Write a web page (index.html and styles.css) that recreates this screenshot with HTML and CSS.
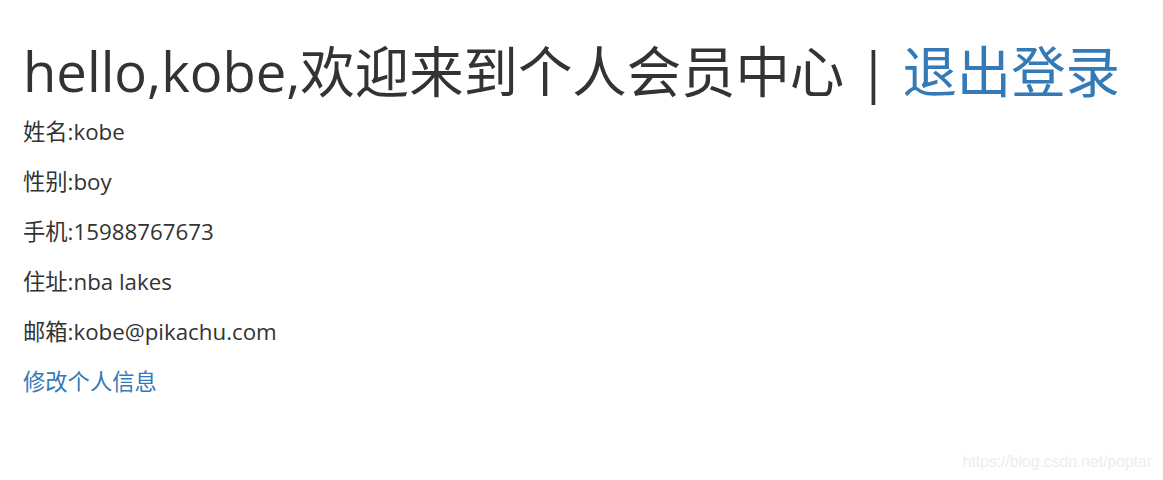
FILE: index.html
```html
<!DOCTYPE html>
<html lang="zh-CN">
<head>
<meta charset="utf-8">
<title>个人会员中心</title>
<link rel="stylesheet" href="styles.css">
</head>
<body>
<div class="page">
  <h1 class="title">hello,kobe,欢迎来到个人会员中心 <span class="sep">|</span> <a class="link" href="#">退出登录</a></h1>
  <p class="row">姓名:kobe</p>
  <p class="row">性别:boy</p>
  <p class="row">手机:15988767673</p>
  <p class="row">住址:nba lakes</p>
  <p class="row">邮箱:kobe@pikachu.com</p>
  <a class="link edit" href="#">修改个人信息</a>
</div>
<div class="watermark">https://blog.csdn.net/poptar</div>
</body>
</html>
```

FILE: styles.css
```css
html, body {
  margin: 0;
  padding: 0;
  background: #fff;
}
body {
  font-family: "Open Sans", "Noto Sans CJK SC", sans-serif;
  color: #333;
  font-size: 22.3px;
  line-height: 30px;
  height: 480px;
  position: relative;
  overflow: hidden;
}
.page {
  padding: 42px 0 0 23px;
}
.title {
  font-size: 54.4px;
  font-weight: 400;
  line-height: 59px;
  margin: 0 0 16px;
  white-space: nowrap;
}
.sep {
  color: #333;
}
.link {
  color: #337ab7;
  text-decoration: none;
}
.row {
  margin: 0 0 20px;
}
.edit {
  display: inline-block;
}
.watermark {
  position: absolute;
  right: 11px;
  bottom: 9px;
  font-family: "Liberation Sans", Arial, sans-serif;
  font-size: 15.7px;
  line-height: 18px;
  color: #ededed;
}
```
